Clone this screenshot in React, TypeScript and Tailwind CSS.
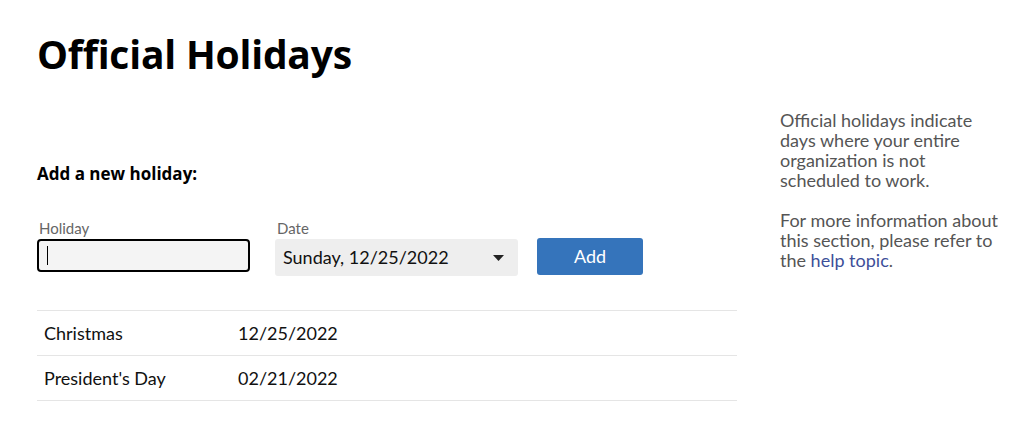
import React from "react";

export default function App() {
  const rows = [
    { name: "Christmas", date: "12/25/2022" },
    { name: "President's Day", date: "02/21/2022" },
  ];
  const bold = { fontFamily: "'Open Sans', Lato, sans-serif" };
  return (
    <div className="w-[1012px] h-[440px] bg-white overflow-hidden" style={{ fontFamily: "Lato, 'Noto Sans', sans-serif" }}>
      <div className="flex pl-[37px]">
        <div className="w-[700px] flex flex-col">
          <h1 className="mt-[30px] text-[39px] leading-[48px] font-bold text-black tracking-[-0.2px]" style={bold}>Official Holidays</h1>
          <div className="mt-[86px] text-[17px] leading-[20px] font-bold text-black" style={bold}>Add a new holiday:</div>
          <div className="mt-[35px] flex items-start">
            <div className="flex flex-col">
              <label className="pl-[2px] text-[15px] leading-[18px] text-[#666]">Holiday</label>
              <div className="mt-[2px] w-[213px] h-[33px] border-2 border-black rounded-[4px] bg-[#f4f4f4] flex items-center pl-[8px]">
                <div className="w-px h-[19px] bg-black" />
              </div>
            </div>
            <div className="ml-[25px] flex flex-col">
              <label className="pl-[2px] text-[15px] leading-[18px] text-[#666]">Date</label>
              <div className="mt-[2px] w-[243px] h-[37px] rounded-[3px] bg-[#eeeeee] flex items-center justify-between pl-[8px] pr-[14px] text-[18px] text-[#111]">
                <span>Sunday, 12/25/2022</span>
                <svg width="11" height="6" viewBox="0 0 11 6"><path d="M0 0h11L5.5 6z" fill="#222" /></svg>
              </div>
            </div>
            <button className="ml-[19px] mt-[19px] w-[106px] h-[37px] rounded-[3px] bg-[#3574bb] text-white text-[18px]">Add</button>
          </div>
          <div className="mt-[34px] border-t border-[#e5e5e5]">
            {rows.map((r) => (
              <div key={r.name} className="flex items-center h-[45px] border-b border-[#e5e5e5] text-[18px] text-[#111]">
                <div className="pl-[7px] w-[201px]">{r.name}</div>
                <div>{r.date}</div>
              </div>
            ))}
          </div>
        </div>
        <div className="ml-[43px] mt-[110px] w-[222px] text-[18px] leading-[20px] text-[#555]">
          <p>Official holidays indicate days where your entire organization is not scheduled to work.</p>
          <p className="mt-[20px]">For more information about this section, please refer to the <a className="text-[#3d4f99]">help topic</a>.</p>
        </div>
      </div>
    </div>
  );
}
